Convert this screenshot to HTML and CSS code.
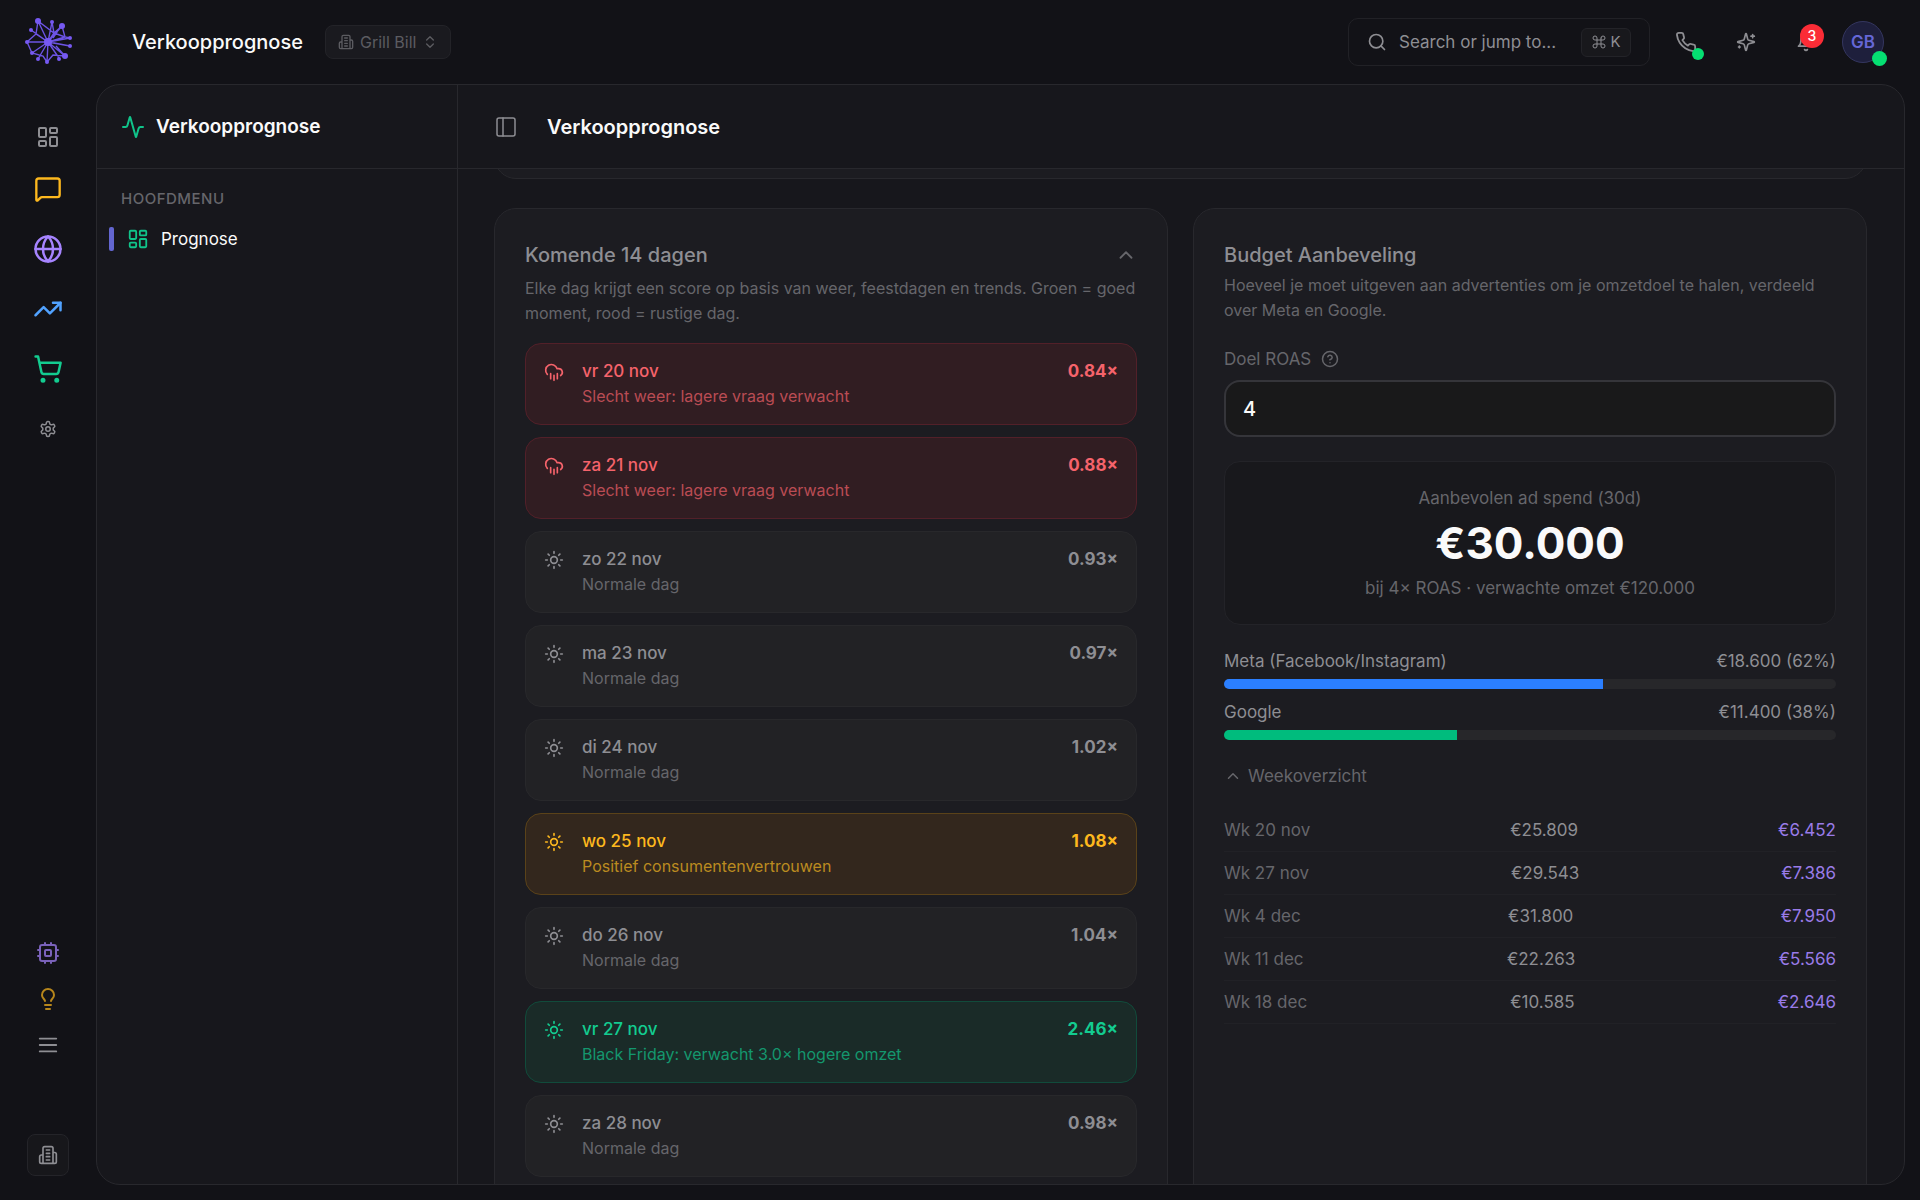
FILE: index.html
```
<!DOCTYPE html>
<html lang="nl">
<head>
<meta charset="utf-8">
<meta name="viewport" content="width=device-width, initial-scale=1">
<title>Verkoopprognose</title>
<link rel="stylesheet" href="styles.css">
</head>
<body>
<svg class="sprite" aria-hidden="true">
  <symbol id="i-dashboard" viewBox="0 0 24 24"><rect width="7" height="9" x="3" y="3" rx="1"/><rect width="7" height="5" x="14" y="3" rx="1"/><rect width="7" height="9" x="14" y="12" rx="1"/><rect width="7" height="5" x="3" y="16" rx="1"/></symbol>
  <symbol id="i-chat" viewBox="0 0 24 24"><path d="M22 17a2 2 0 0 1-2 2H6.828a2 2 0 0 0-1.414.586l-2.202 2.202A.71.71 0 0 1 2 21.286V5a2 2 0 0 1 2-2h16a2 2 0 0 1 2 2z"/></symbol>
  <symbol id="i-globe" viewBox="0 0 24 24"><circle cx="12" cy="12" r="10"/><path d="M12 2a14.5 14.5 0 0 0 0 20 14.5 14.5 0 0 0 0-20M2 12h20"/></symbol>
  <symbol id="i-trend" viewBox="0 0 24 24"><path d="M16 7h6v6"/><path d="m22 7-8.500 8.500-5-5L2 17"/></symbol>
  <symbol id="i-cart" viewBox="0 0 24 24"><circle cx="8" cy="21" r="1"/><circle cx="19" cy="21" r="1"/><path d="M2.050 2.050h2l2.660 12.420a2 2 0 0 0 2 1.580h9.780a2 2 0 0 0 1.950-1.570l1.650-7.430H5.120"/></symbol>
  <symbol id="i-gear" viewBox="0 0 24 24"><path d="M12.220 2h-.44a2 2 0 0 0-2 2v.18a2 2 0 0 1-1 1.730l-.43.25a2 2 0 0 1-2 0l-.15-.08a2 2 0 0 0-2.730.73l-.22.38a2 2 0 0 0 .73 2.730l.15.1a2 2 0 0 1 1 1.720v.51a2 2 0 0 1-1 1.740l-.15.09a2 2 0 0 0-.73 2.730l.22.38a2 2 0 0 0 2.730.73l.15-.08a2 2 0 0 1 2 0l.43.25a2 2 0 0 1 1 1.730V20a2 2 0 0 0 2 2h.44a2 2 0 0 0 2-2v-.18a2 2 0 0 1 1-1.730l.43-.25a2 2 0 0 1 2 0l.15.08a2 2 0 0 0 2.730-.73l.22-.39a2 2 0 0 0-.73-2.730l-.15-.08a2 2 0 0 1-1-1.740v-.5a2 2 0 0 1 1-1.740l.15-.09a2 2 0 0 0 .73-2.730l-.22-.38a2 2 0 0 0-2.730-.73l-.15.08a2 2 0 0 1-2 0l-.43-.25a2 2 0 0 1-1-1.730V4a2 2 0 0 0-2-2z"/><circle cx="12" cy="12" r="3"/></symbol>
  <symbol id="i-cpu" viewBox="0 0 24 24"><rect x="4" y="4" width="16" height="16" rx="2"/><rect x="9" y="9" width="6" height="6" rx="1"/><path d="M9 2v2M15 2v2M9 20v2M15 20v2M2 9h2M2 15h2M20 9h2M20 15h2"/></symbol>
  <symbol id="i-bulb" viewBox="0 0 24 24"><path d="M15 14c.2-1 .7-1.700 1.500-2.500 1-.9 1.500-2.200 1.500-3.500A6 6 0 0 0 6 8c0 1 .2 2.200 1.500 3.500.7.7 1.300 1.500 1.500 2.500M9 18h6M10 22h4"/></symbol>
  <symbol id="i-menu" viewBox="0 0 24 24"><path d="M3 5h18M3 12h18M3 19h18"/></symbol>
  <symbol id="i-building" viewBox="0 0 24 24"><path d="M6 22V4a2 2 0 0 1 2-2h8a2 2 0 0 1 2 2v18ZM6 12H4a2 2 0 0 0-2 2v6a2 2 0 0 0 2 2h2M18 9h2a2 2 0 0 1 2 2v9a2 2 0 0 1-2 2h-2M10 6h4M10 10h4M10 14h4M10 18h4"/></symbol>
  <symbol id="i-updown" viewBox="0 0 24 24"><path d="m7 15 5 5 5-5M7 9l5-5 5 5"/></symbol>
  <symbol id="i-search" viewBox="0 0 24 24"><circle cx="11" cy="11" r="8"/><path d="m21 21-4.300-4.300"/></symbol>
  <symbol id="i-command" viewBox="0 0 24 24"><path d="M15 6v12a3 3 0 1 0 3-3H6a3 3 0 1 0 3 3V6a3 3 0 1 0-3 3h12a3 3 0 1 0-3-3"/></symbol>
  <symbol id="i-phone" viewBox="0 0 24 24"><path d="M22 16.920v3a2 2 0 0 1-2.180 2 19.790 19.790 0 0 1-8.630-3.070 19.500 19.500 0 0 1-6-6 19.790 19.790 0 0 1-3.070-8.670A2 2 0 0 1 4.110 2h3a2 2 0 0 1 2 1.720 12.840 12.840 0 0 0 .7 2.810 2 2 0 0 1-.45 2.110L8.090 9.910a16 16 0 0 0 6 6l1.270-1.270a2 2 0 0 1 2.110-.45 12.840 12.840 0 0 0 2.810.7A2 2 0 0 1 22 16.920z"/></symbol>
  <symbol id="i-sparkles" viewBox="0 0 24 24"><path d="M9.937 15.500A2 2 0 0 0 8.500 14.063l-6.135-1.582a.5.5 0 0 1 0-.962L8.500 9.936A2 2 0 0 0 9.937 8.500l1.582-6.135a.5.5 0 0 1 .963 0L14.063 8.500A2 2 0 0 0 15.500 9.937l6.135 1.581a.5.5 0 0 1 0 .964L15.500 14.063a2 2 0 0 0-1.437 1.437l-1.582 6.135a.5.5 0 0 1-.963 0zM20 3v4M22 5h-4M4 17v2M5 18H3"/></symbol>
  <symbol id="i-bell" viewBox="0 0 24 24"><path d="M6 8a6 6 0 0 1 12 0c0 7 3 9 3 9H3s3-2 3-9M10.300 21a1.940 1.940 0 0 0 3.400 0"/></symbol>
  <symbol id="i-activity" viewBox="0 0 24 24"><path d="M22 12h-2.480a2 2 0 0 0-1.930 1.460l-2.350 8.360a.25.25 0 0 1-.48 0L9.240 2.180a.25.25 0 0 0-.48 0l-2.350 8.360A2 2 0 0 1 4.490 12H2"/></symbol>
  <symbol id="i-panel" viewBox="0 0 24 24"><rect width="18" height="18" x="3" y="3" rx="2"/><path d="M9 3v18"/></symbol>
  <symbol id="i-up" viewBox="0 0 24 24"><path d="m18 15-6-6-6 6"/></symbol>
  <symbol id="i-help" viewBox="0 0 24 24"><circle cx="12" cy="12" r="10"/><path d="M9.090 9a3 3 0 0 1 5.830 1c0 2-3 3-3 3M12 17h.01"/></symbol>
  <symbol id="i-rain" viewBox="0 0 24 24"><path d="M4 14.899A7 7 0 1 1 15.710 8h1.790a4.500 4.500 0 0 1 2.500 8.242M16 14v6M8 14v6M12 16v6"/></symbol>
  <symbol id="i-sun" viewBox="0 0 24 24"><circle cx="12" cy="12" r="4"/><path d="M12 2v2M12 20v2M4.930 4.930l1.410 1.410M17.660 17.660l1.410 1.410M2 12h2M20 12h2M6.340 17.660l-1.410 1.410M19.070 4.930l-1.410 1.410"/></symbol>
</svg>

<header class="topbar">
  <a class="logo" href="#" aria-label="Home">
    <svg viewBox="0 0 60 60">
      <path d="M28 30 18 9M28 30 32 10M28 30 42 14M28 30 11 18M28 30 50 26M28 30 50 34M28 30 45 44M28 30 39 46M28 30 27 50M28 30 18 47M28 30 12 41M28 30 7 30M18 9 34 21 42 14 45 25 50 26M18 9 16 22 7 30 12 41 23 44 27 50 33 43 45 44M32 10 34 21 28 30M16 22 28 30M45 25 34 21M28 30 45 25M34 31 50 34M36 34 45 44M41 14 33 26"/>
      <g><circle cx="18" cy="9" r="3"/><circle cx="32" cy="10" r="2"/><circle cx="42" cy="14" r="3"/><circle cx="11" cy="18" r="2"/><circle cx="50" cy="26" r="2"/><circle cx="50" cy="34" r="2"/><circle cx="45" cy="44" r="3"/><circle cx="39" cy="47" r="2"/><circle cx="27" cy="50" r="2"/><circle cx="18" cy="47" r="2"/><circle cx="12" cy="41" r="2"/><circle cx="7" cy="30" r="2"/><circle cx="28" cy="30" r="4"/></g>
    </svg>
  </a>
  <div class="topbar-title">Verkoopprognose</div>
  <button class="org" type="button"><svg class="icon s16"><use href="#i-building"/></svg>Grill Bill<svg class="icon s16"><use href="#i-updown"/></svg></button>
  <div class="actions">
    <button class="search" type="button"><svg class="icon s20"><use href="#i-search"/></svg><span>Search or jump to...</span><kbd><svg class="icon s16"><use href="#i-command"/></svg>K</kbd></button>
    <button class="tool" type="button" aria-label="Bellen"><svg class="icon s22"><use href="#i-phone"/></svg><i class="dot"></i></button>
    <button class="tool" type="button" aria-label="Assistent"><svg class="icon s20"><use href="#i-sparkles"/></svg></button>
    <button class="tool" type="button" aria-label="Meldingen"><svg class="icon s20"><use href="#i-bell"/></svg><b class="count">3</b></button>
    <button class="avatar" type="button">GB<i class="status"></i></button>
  </div>
</header>

<div class="shell">
  <nav class="rail" aria-label="Apps">
    <a class="rail-item first" href="#" aria-label="Dashboard"><svg class="icon s24"><use href="#i-dashboard"/></svg></a>
    <a class="rail-item amber" href="#" aria-label="Chat"><svg class="icon s28"><use href="#i-chat"/></svg></a>
    <a class="rail-item violet" href="#" aria-label="Website"><svg class="icon s30"><use href="#i-globe"/></svg></a>
    <a class="rail-item blue" href="#" aria-label="Trends"><svg class="icon s30"><use href="#i-trend"/></svg></a>
    <a class="rail-item green" href="#" aria-label="Winkel"><svg class="icon s30"><use href="#i-cart"/></svg></a>
    <a class="rail-item" href="#" aria-label="Instellingen"><svg class="icon s18"><use href="#i-gear"/></svg></a>
    <div class="rail-foot">
      <a class="rail-item small violet dim" href="#" aria-label="Systeem"><svg class="icon s24"><use href="#i-cpu"/></svg></a>
      <a class="rail-item small amber dim" href="#" aria-label="Tips"><svg class="icon s24"><use href="#i-bulb"/></svg></a>
      <a class="rail-item small" href="#" aria-label="Menu"><svg class="icon s22"><use href="#i-menu"/></svg></a>
      <button class="company" type="button" aria-label="Bedrijf"><svg class="icon s20"><use href="#i-building"/></svg></button>
    </div>
  </nav>

  <div class="panel">
    <aside class="sidebar">
      <div class="side-head"><svg class="icon s24"><use href="#i-activity"/></svg>Verkoopprognose</div>
      <p class="side-label">Hoofdmenu</p>
      <a class="side-link" href="#"><svg class="icon s22"><use href="#i-dashboard"/></svg>Prognose</a>
    </aside>

    <main class="main">
      <div class="main-head">
        <button class="plain" type="button" aria-label="Zijbalk"><svg class="icon s24"><use href="#i-panel"/></svg></button>
        <h1>Verkoopprognose</h1>
      </div>
      <div class="scroll">
        <section class="card previous"></section>
        <div class="columns">
          <section class="card">
            <div class="card-head"><h2>Komende 14 dagen</h2><button class="plain" type="button" aria-label="Inklappen"><svg class="icon s22"><use href="#i-up"/></svg></button></div>
            <p class="intro days-intro">Elke dag krijgt een score op basis van weer, feestdagen en trends. Groen = goed moment, rood = rustige dag.</p>
            <ul class="days">
              <li class="day bad"><svg class="icon s20"><use href="#i-rain"/></svg><div><strong>vr 20 nov</strong><span>Slecht weer: lagere vraag verwacht</span></div><b>0.84×</b></li>
              <li class="day bad"><svg class="icon s20"><use href="#i-rain"/></svg><div><strong>za 21 nov</strong><span>Slecht weer: lagere vraag verwacht</span></div><b>0.88×</b></li>
              <li class="day"><svg class="icon s20"><use href="#i-sun"/></svg><div><strong>zo 22 nov</strong><span>Normale dag</span></div><b>0.93×</b></li>
              <li class="day"><svg class="icon s20"><use href="#i-sun"/></svg><div><strong>ma 23 nov</strong><span>Normale dag</span></div><b>0.97×</b></li>
              <li class="day"><svg class="icon s20"><use href="#i-sun"/></svg><div><strong>di 24 nov</strong><span>Normale dag</span></div><b>1.02×</b></li>
              <li class="day warm"><svg class="icon s20"><use href="#i-sun"/></svg><div><strong>wo 25 nov</strong><span>Positief consumentenvertrouwen</span></div><b>1.08×</b></li>
              <li class="day"><svg class="icon s20"><use href="#i-sun"/></svg><div><strong>do 26 nov</strong><span>Normale dag</span></div><b>1.04×</b></li>
              <li class="day good"><svg class="icon s20"><use href="#i-sun"/></svg><div><strong>vr 27 nov</strong><span>Black Friday: verwacht 3.0× hogere omzet</span></div><b>2.46×</b></li>
              <li class="day"><svg class="icon s20"><use href="#i-sun"/></svg><div><strong>za 28 nov</strong><span>Normale dag</span></div><b>0.98×</b></li>
            </ul>
          </section>

          <section class="card">
            <div class="card-head"><h2>Budget Aanbeveling</h2></div>
            <p class="intro">Hoeveel je moet uitgeven aan advertenties om je omzetdoel te halen, verdeeld over Meta en Google.</p>
            <label class="field-label" for="roas">Doel ROAS<svg class="icon s18"><use href="#i-help"/></svg></label>
            <input class="field" id="roas" type="text" inputmode="decimal" value="4">
            <div class="spend">
              <p>Aanbevolen ad spend (30d)</p>
              <strong>€30.000</strong>
              <p>bij 4× ROAS · verwachte omzet €120.000</p>
            </div>
            <div class="split">
              <div class="split-row"><span>Meta (Facebook/Instagram)</span><span>€18.600 (62%)</span></div>
              <div class="bar"><div class="fill meta" style="width:62%"></div></div>
            </div>
            <div class="split">
              <div class="split-row"><span>Google</span><span>€11.400 (38%)</span></div>
              <div class="bar"><div class="fill google" style="width:38%"></div></div>
            </div>
            <button class="plain weeks-toggle" type="button"><svg class="icon s18"><use href="#i-up"/></svg>Weekoverzicht</button>
            <table class="weeks">
              <tbody>
                <tr><th scope="row">Wk 20 nov</th><td>€25.809</td><td>€6.452</td></tr>
                <tr><th scope="row">Wk 27 nov</th><td>€29.543</td><td>€7.386</td></tr>
                <tr><th scope="row">Wk 4 dec</th><td>€31.800</td><td>€7.950</td></tr>
                <tr><th scope="row">Wk 11 dec</th><td>€22.263</td><td>€5.566</td></tr>
                <tr><th scope="row">Wk 18 dec</th><td>€10.585</td><td>€2.646</td></tr>
              </tbody>
            </table>
          </section>
        </div>
      </div>
    </main>
  </div>
</div>
</body>
</html>
```
FILE: styles.css
```
:root {
  --bg: #121217;
  --panel: #17171c;
  --card: #1c1c21;
  --line: #28282d;
  --text: #fafafa;
  --soft: #8e8e93;
  --mute: #66666b;
}

* { box-sizing: border-box; }

body {
  margin: 0;
  height: 100vh;
  display: flex;
  flex-direction: column;
  overflow: hidden;
  background: var(--bg);
  color: var(--soft);
  font: 17px/24px Inter, "Liberation Sans", sans-serif;
}

h1, h2, p, ul { margin: 0; padding: 0; }
ul { list-style: none; }
a { color: inherit; text-decoration: none; }
button { margin: 0; padding: 0; border: 0; background: none; color: inherit; font: inherit; }

.sprite { position: absolute; width: 0; height: 0; }

.icon {
  flex: none;
  display: block;
  fill: none;
  stroke: currentColor;
  stroke-width: 2;
  stroke-linecap: round;
  stroke-linejoin: round;
}
.s16 { width: 16px; height: 16px; }
.s18 { width: 18px; height: 18px; }
.s20 { width: 20px; height: 20px; }
.s22 { width: 22px; height: 22px; }
.s24 { width: 24px; height: 24px; }
.s28 { width: 28px; height: 28px; }
.s30 { width: 30px; height: 30px; }

/* Top bar */
.topbar {
  flex: none;
  height: 84px;
  padding-right: 36px;
  display: flex;
  align-items: center;
}
.logo { width: 96px; margin-right: 36px; padding-left: 20px; }
.logo svg { display: block; width: 60px; height: 60px; fill: none; stroke: #6c54e4; stroke-width: 1.4; }
.logo circle { fill: #7659f2; stroke: none; }
.topbar-title { color: var(--text); font-size: 20px; font-weight: 500; }

.org {
  height: 34px;
  margin-left: 22px;
  padding: 0 12px;
  display: flex;
  align-items: center;
  gap: 6px;
  border: 1px solid #232328;
  border-radius: 8px;
  background: #1a1a1f;
  color: #5c5c61;
  font-size: 16px;
}

.actions { margin-left: auto; display: flex; align-items: center; gap: 12px; }
.search {
  width: 302px;
  height: 48px;
  padding: 0 18px;
  display: flex;
  align-items: center;
  gap: 12px;
  border: 1px solid #212126;
  border-radius: 10px;
}
.search span { white-space: nowrap; }
kbd {
  width: 50px;
  height: 29px;
  margin-left: auto;
  display: flex;
  align-items: center;
  justify-content: center;
  gap: 3px;
  border: 1px solid #232328;
  border-radius: 6px;
  background: #18181c;
  font: 15px/20px Inter, "Liberation Sans", sans-serif;
}
kbd .icon { stroke-width: 1.5; }
.tool {
  position: relative;
  width: 48px;
  height: 48px;
  display: flex;
  align-items: center;
  justify-content: center;
}
.dot, .status { position: absolute; border-radius: 50%; background: #05df72; }
.dot { width: 12px; height: 12px; right: 6px; bottom: 6px; }
.count {
  position: absolute;
  top: 6px;
  right: 6px;
  width: 24px;
  height: 24px;
  border-radius: 50%;
  background: #fb2c36;
  color: #fff;
  font-size: 14px;
  font-weight: 500;
  text-align: center;
}
.avatar {
  position: relative;
  width: 42px;
  height: 42px;
  border: 1px solid #34365f;
  border-radius: 50%;
  background: #1e1f3c;
  color: #6567d6;
  font-weight: 600;
}
.status { width: 15px; height: 15px; right: -4px; bottom: -4px; }

/* Shell */
.shell { flex: 1; min-height: 0; display: flex; }
.rail {
  flex: none;
  width: 96px;
  padding: 31px 0 24px;
  display: flex;
  flex-direction: column;
  align-items: center;
}
.rail-item {
  width: 60px;
  height: 60px;
  display: flex;
  align-items: center;
  justify-content: center;
}
.rail-item.first { height: 44px; }
.rail-item.small { height: 46px; }
.rail-foot { margin-top: auto; display: flex; flex-direction: column; align-items: center; }
.amber { color: #fdb81e; }
.violet { color: #a684ff; }
.blue { color: #51a2ff; }
.green { color: #13cc90; }
.dim { opacity: 0.7; }
.company {
  width: 42px;
  height: 42px;
  margin-top: 66px;
  display: flex;
  align-items: center;
  justify-content: center;
  border: 1px solid #242429;
  border-radius: 8px;
  background: #17171b;
}

.panel {
  flex: 1;
  min-width: 0;
  margin: 0 15px 15px 0;
  display: flex;
  overflow: hidden;
  border: 1px solid var(--line);
  border-radius: 24px;
  background: var(--panel);
}
.sidebar { flex: none; width: 361px; border-right: 1px solid var(--line); }
.side-head {
  height: 84px;
  padding-left: 24px;
  display: flex;
  align-items: center;
  gap: 11px;
  border-bottom: 1px solid var(--line);
  color: var(--text);
  font-size: 19px;
  font-weight: 600;
}
.side-head .icon, .side-link .icon { color: #10c48a; }
.side-label {
  padding: 18px 24px 16px;
  color: var(--mute);
  font-size: 15px;
  font-weight: 500;
  letter-spacing: 0.5px;
  text-transform: uppercase;
}
.side-link {
  margin-left: 12px;
  display: flex;
  align-items: center;
  gap: 12px;
  color: var(--text);
}
.side-link::before {
  content: "";
  width: 5px;
  height: 24px;
  margin-right: 1px;
  border-radius: 2px;
  background: #6366d0;
}

.main { flex: 1; min-width: 0; display: flex; flex-direction: column; }
.main-head {
  flex: none;
  height: 84px;
  padding-left: 36px;
  display: flex;
  align-items: center;
  gap: 29px;
  border-bottom: 1px solid var(--line);
}
.main-head h1 { color: var(--text); font-size: 20px; font-weight: 600; }
.main-head .icon { stroke-width: 1.5; }

.scroll { flex: 1; min-height: 0; padding: 0 37px 0 36px; overflow: hidden; }
.card { padding: 30px; border: 1px solid var(--line); border-radius: 22px; background: var(--card); }
.previous { margin-top: -52px; margin-bottom: 29px; }
.columns { display: grid; grid-template-columns: 1fr 1fr; gap: 25px; }

.card-head { height: 32px; display: flex; align-items: center; justify-content: space-between; }
.card-head h2 { font-size: 20px; font-weight: 500; }
.intro { margin-top: 2px; color: var(--mute); font-size: 16px; line-height: 25px; }
.card .days-intro { margin-top: 5px; }
.card-head .icon { color: var(--mute); }

/* Day list */
.days { margin-top: 17px; display: grid; gap: 12px; }
.day {
  padding: 15px 18px;
  display: flex;
  gap: 18px;
  border: 1px solid #28282b;
  border-radius: 16px;
  background: #222225;
  line-height: 25px;
}
.day .icon { margin-top: 3px; }
.day div { flex: 1; min-width: 0; }
.day strong, .day span { display: block; }
.day strong { font-weight: 500; }
.day span { color: var(--mute); font-size: 16px; }
.day b { font-weight: 700; }
.bad { border-color: #522029; background: #311d22; color: #f5636b; }
.bad span { color: #ba4c54; }
.warm { border-color: #5a4219; background: #33271d; color: #fdb81e; }
.warm span { color: #bb8b20; }
.good { border-color: #114b3b; background: #1a2b28; color: #13cc90; }
.good span { color: #14976e; }

/* Budget */
.field-label { margin-top: 24px; display: flex; align-items: center; gap: 10px; color: var(--mute); }
.field {
  display: block;
  width: 100%;
  height: 57px;
  margin-top: 9px;
  padding: 0 17px;
  border: 2px solid #35353a;
  border-radius: 16px;
  background: #19191a;
  color: var(--text);
  font: 500 20px/24px Inter, "Liberation Sans", sans-serif;
}
.spend {
  margin: 24px 0;
  padding: 24px;
  display: flex;
  flex-direction: column;
  align-items: center;
  gap: 11px;
  border: 1px solid #232328;
  border-radius: 16px;
  background: #18181c;
  color: var(--mute);
}
.spend strong { color: var(--text); font-size: 44px; line-height: 44px; font-weight: 700; }
.split { margin-bottom: 11px; }
.split-row { display: flex; justify-content: space-between; }
.bar { height: 10px; margin-top: 6px; overflow: hidden; border-radius: 5px; background: #27272a; }
.fill { height: 100%; }
.meta { background: #2b7fff; }
.google { background: #00bc7d; }
.weeks-toggle { margin-top: 24px; display: flex; align-items: center; gap: 6px; color: var(--mute); }

.weeks { display: block; margin-top: 21px; }
.weeks tbody { display: block; }
.weeks tr {
  height: 43px;
  display: flex;
  align-items: center;
  justify-content: space-between;
  border-bottom: 1px solid #212126;
}
.weeks th, .weeks td { padding: 0; font-weight: 400; }
.weeks th { color: var(--mute); }
.weeks td:last-child { color: #997be8; }
```
